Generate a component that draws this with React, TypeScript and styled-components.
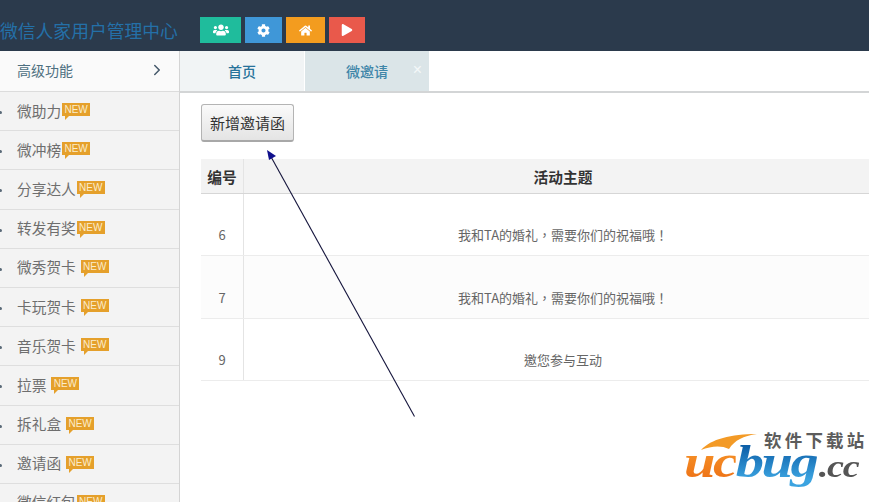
import React from 'react'
import styled, { createGlobalStyle } from 'styled-components'
import { FaUsers, FaCog, FaHome, FaPlay } from 'react-icons/fa'
import { FiChevronRight } from 'react-icons/fi'

const cjk = `"Noto Sans CJK SC", "Liberation Sans", sans-serif`
const cjkTc = `"Noto Sans CJK TC", "Liberation Sans", sans-serif`

const GlobalStyle = createGlobalStyle`
  html, body {
    margin: 0;
    padding: 0;
    background: #fff;
    overflow: hidden;
  }
  * {
    box-sizing: border-box;
  }
`

const Page = styled.div`
  position: relative;
  width: 869px;
  height: 502px;
  overflow: hidden;
  font-family: ${cjk};
`

const Header = styled.header`
  display: flex;
  align-items: center;
  height: 51px;
  padding-top: 9px;
  background: #2b3a4c;
`

const Brand = styled.div`
  width: 200px;
  font-size: 17.8px;
  line-height: 24px;
  white-space: nowrap;
  color: #2470a8;
`

const QuickButtons = styled.div`
  display: flex;
  gap: 4px;
`

const QuickButton = styled.div<{ $bg: string; $w: number; $size: number }>`
  display: flex;
  align-items: center;
  justify-content: center;
  width: ${p => p.$w}px;
  height: 26px;
  color: #fff;
  font-size: ${p => p.$size}px;
  background: ${p => p.$bg};
`

const Body = styled.div`
  display: flex;
  height: 451px;
`

const Sidebar = styled.aside`
  flex: none;
  width: 180px;
  overflow: hidden;
  background: #f3f3f3;
  border-right: 1px solid #d4d4d4;
`

const MenuHead = styled.div`
  display: flex;
  align-items: center;
  justify-content: space-between;
  height: 41px;
  padding: 0 13px 2px 17px;
  font-size: 14px;
  color: #4d6f7f;
  background: #fafafa;
  border-bottom: 1px solid #dcdcdc;
  svg {
    font-size: 18px;
    color: #44586a;
  }
`

const MenuItem = styled.div`
  position: relative;
  display: flex;
  align-items: center;
  height: 39.2px;
  padding: 0 0 2px 17px;
  font-size: 14.7px;
  color: #6e6e6e;
  border-bottom: 1px solid #dedede;
  &::before {
    content: '';
    position: absolute;
    left: -1px;
    top: 19px;
    width: 3px;
    height: 3px;
    border-radius: 50%;
    background: #5a6a78;
  }
`

const NewBadge = styled.span<{ $gap: number }>`
  position: relative;
  display: block;
  width: 28px;
  height: 13px;
  margin-left: ${p => p.$gap}px;
  margin-top: -1px;
  font-family: "Liberation Sans", sans-serif;
  font-size: 10px;
  line-height: 13px;
  text-align: center;
  color: #fbeccb;
  background: #e5a02b;
  &::after {
    content: '';
    position: absolute;
    left: 3px;
    top: 13px;
    border-top: 4px solid #e5a02b;
    border-right: 4px solid transparent;
  }
`

const Main = styled.main`
  flex: 1;
  min-width: 0;
  overflow: hidden;
  background: #fff;
`

const Tabs = styled.nav`
  display: flex;
  height: 42px;
  border-bottom: 2px solid #d3d5d6;
`

const Tab = styled.div<{ $active?: boolean }>`
  position: relative;
  display: flex;
  align-items: center;
  justify-content: center;
  width: 124px;
  margin-right: 1px;
  font-size: 14px;
  font-weight: 500;
  color: ${p => (p.$active ? '#3f86a8' : '#27729a')};
  background: ${p => (p.$active ? '#dbe5e8' : '#f1f4f5')};
`

const TabClose = styled.span`
  position: absolute;
  right: 7px;
  top: 11px;
  font-family: "Liberation Sans", sans-serif;
  font-size: 16px;
  line-height: 16px;
  color: #f4f8f9;
`

const Content = styled.div`
  padding: 11px 0 0 21px;
`

const AddButton = styled.button`
  display: block;
  width: 93px;
  height: 38px;
  padding: 0;
  font-family: ${cjk};
  font-size: 15px;
  color: #333;
  background: linear-gradient(#fafafa, #e4e4e4);
  border: 1px solid #b4b4b4;
  border-bottom: 2px solid #a8a8a8;
  border-radius: 3px;
`

const Table = styled.div`
  width: 681px;
  margin-top: 17px;
`

const Row = styled.div<{ $head?: boolean; $bg?: string }>`
  display: grid;
  grid-template-columns: 43px 1fr;
  height: ${p => (p.$head ? '35px' : '62.4px')};
  background: ${p => p.$bg || '#fff'};
  border-bottom: 1px solid ${p => (p.$head ? '#d6d6d6' : '#ececec')};
`

const Cell = styled.div<{ $head?: boolean; $first?: boolean }>`
  display: flex;
  align-items: ${p => (p.$head ? 'center' : 'flex-end')};
  justify-content: center;
  padding-bottom: ${p => (p.$head ? '0' : '11px')};
  font-family: ${p => (p.$head ? cjk : cjkTc)};
  font-size: ${p => (p.$head ? '14.7px' : '13px')};
  font-weight: ${p => (p.$head ? 700 : 400)};
  color: ${p => (p.$head ? '#333' : '#666')};
  border-right: ${p => (p.$first ? '1px solid #e4e4e4' : 'none')};
`

const Annotation = styled.svg`
  position: absolute;
  left: 0;
  top: 0;
  pointer-events: none;
`

const Watermark = styled.div`
  position: absolute;
  left: 685px;
  top: 432px;
  width: 184px;
  height: 52px;
`

const Swoosh = styled.svg`
  position: absolute;
  left: 0;
  top: 0;
`

const SiteName = styled.div`
  position: absolute;
  left: 79px;
  top: -1px;
  font-size: 17.5px;
  font-weight: 700;
  line-height: 18px;
  letter-spacing: 3.2px;
  white-space: nowrap;
  color: #5c5c5c;
`

const LogoWord = styled.div`
  position: absolute;
  left: -1px;
  top: 14px;
  font-family: "Liberation Serif", serif;
  font-weight: 700;
  font-style: italic;
  font-size: 46px;
  line-height: 32px;
  letter-spacing: -2px;
  white-space: nowrap;
  transform: scaleX(1.23);
  transform-origin: left center;
`

const LogoOrange = styled.span`
  background: linear-gradient(#f9a02f, #ec6a12);
  -webkit-background-clip: text;
  background-clip: text;
  color: transparent;
`

const LogoBlue = styled.span`
  background: linear-gradient(#0d5fa8 20%, #3ba3e0 85%);
  -webkit-background-clip: text;
  background-clip: text;
  color: transparent;
`

const LogoTld = styled.span`
  margin-left: 2px;
  font-size: 31px;
  letter-spacing: -1px;
  color: #555;
`

const quickButtons = [
  { bg: '#1fbc9c', w: 41, size: 16, icon: <FaUsers /> },
  { bg: '#3f97d8', w: 37, size: 13, icon: <FaCog /> },
  { bg: '#f39c1f', w: 39, size: 13, icon: <FaHome /> },
  { bg: '#e9594b', w: 36, size: 12, icon: <FaPlay /> },
]

const menu = [
  { name: '微助力', gap: 1 },
  { name: '微冲榜', gap: 1 },
  { name: '分享达人', gap: 1 },
  { name: '转发有奖', gap: 1 },
  { name: '微秀贺卡', gap: 5 },
  { name: '卡玩贺卡', gap: 5 },
  { name: '音乐贺卡', gap: 5 },
  { name: '拉票', gap: 5 },
  { name: '拆礼盒', gap: 5 },
  { name: '邀请函', gap: 5 },
  { name: '微信红包', gap: 1 },
]

const rows = [
  { id: 6, title: '我和TA的婚礼，需要你们的祝福哦！', bg: '#fff' },
  { id: 7, title: '我和TA的婚礼，需要你们的祝福哦！', bg: '#fcfcfc' },
  { id: 9, title: '邀您参与互动', bg: '#fff' },
]

function App() {
  return (
    <Page>
      <GlobalStyle />
      <Header>
        <Brand>微信人家用户管理中心</Brand>
        <QuickButtons>
          {quickButtons.map(b => (
            <QuickButton key={b.bg} $bg={b.bg} $w={b.w} $size={b.size}>
              {b.icon}
            </QuickButton>
          ))}
        </QuickButtons>
      </Header>
      <Body>
        <Sidebar>
          <MenuHead>
            高级功能
            <FiChevronRight />
          </MenuHead>
          {menu.map(item => (
            <MenuItem key={item.name}>
              {item.name}
              <NewBadge $gap={item.gap}>NEW</NewBadge>
            </MenuItem>
          ))}
        </Sidebar>
        <Main>
          <Tabs>
            <Tab>首页</Tab>
            <Tab $active>
              微邀请
              <TabClose>×</TabClose>
            </Tab>
          </Tabs>
          <Content>
            <AddButton>新增邀请函</AddButton>
            <Table>
              <Row $head $bg="#f3f3f3">
                <Cell $head $first>编号</Cell>
                <Cell $head>活动主题</Cell>
              </Row>
              {rows.map(r => (
                <Row key={r.id} $bg={r.bg}>
                  <Cell $first>{r.id}</Cell>
                  <Cell>{r.title}</Cell>
                </Row>
              ))}
            </Table>
          </Content>
        </Main>
      </Body>
      <Annotation width="869" height="502" viewBox="0 0 869 502">
        <line x1="414.5" y1="416.5" x2="270" y2="155" stroke="#14143c" strokeWidth="1.1" />
        <polygon points="267,150 276,156 269,160" fill="#10108c" />
      </Annotation>
      <Watermark>
        <Swoosh width="100" height="30" viewBox="0 0 100 30">
          <path d="M16 18 C26 7 46 2 72 2 C58 4 50 8 44 17 C36 13 26 14 16 18 Z" fill="#f39a26" />
        </Swoosh>
        <SiteName>软件下载站</SiteName>
        <LogoWord>
          <LogoOrange>uc</LogoOrange>
          <LogoBlue>bug</LogoBlue>
          <LogoTld>.cc</LogoTld>
        </LogoWord>
      </Watermark>
    </Page>
  )
}

export default App
